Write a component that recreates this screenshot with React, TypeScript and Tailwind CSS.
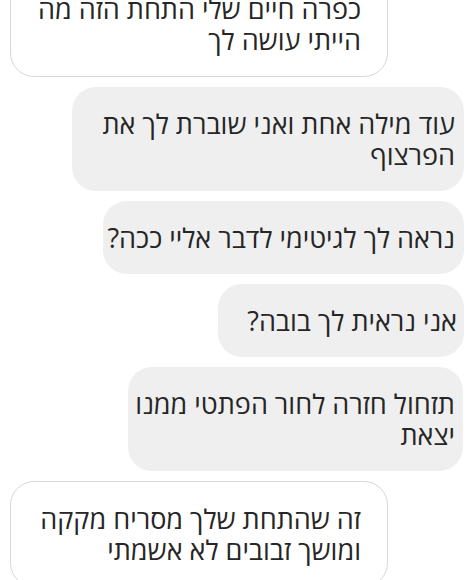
import React from "react";

const font = { fontFamily: '"Open Sans", "DejaVu Sans", "Liberation Sans", sans-serif' };

export default function App() {
  return (
    <div className="h-[580px] w-full overflow-hidden bg-white" style={font}>
      <div className="mt-[-29px] flex flex-col gap-[10px] text-[27px] leading-[31px] text-[#262626]">
        <div dir="rtl" className="ml-[10px] w-[378px] self-start rounded-[24px] border border-[#d8d8d8] bg-white py-[21px] pr-[26px] text-right">
          <div className="whitespace-nowrap">כפרה חיים שלי התחת הזה מה</div>
          <div className="whitespace-nowrap">הייתי עושה לך</div>
        </div>
        <div dir="rtl" className="mr-[3px] w-[392px] self-end rounded-[24px] bg-[#efefef] py-[21px] pr-[9px] text-right">
          <div className="whitespace-nowrap">עוד מילה אחת ואני שוברת לך את</div>
          <div className="whitespace-nowrap">הפרצוף</div>
        </div>
        <div dir="rtl" className="mr-[3px] w-[361px] self-end rounded-[24px] bg-[#efefef] py-[21px] pr-[9px] text-right">
          <div className="whitespace-nowrap">נראה לך לגיטימי לדבר אליי ככה?</div>
        </div>
        <div dir="rtl" className="mr-[3px] w-[246px] self-end rounded-[24px] bg-[#efefef] py-[21px] pr-[7px] text-right">
          <div className="whitespace-nowrap">אני נראית לך בובה?</div>
        </div>
        <div dir="rtl" className="mr-[4px] w-[335px] self-end rounded-[24px] bg-[#efefef] py-[21px] pr-[8px] text-right">
          <div className="whitespace-nowrap">תזחול חזרה לחור הפתטי ממנו</div>
          <div className="whitespace-nowrap">יצאת</div>
        </div>
        <div dir="rtl" className="ml-[10px] w-[378px] self-start rounded-[24px] border border-[#d8d8d8] bg-white py-[21px] pr-[26px] text-right">
          <div className="whitespace-nowrap">זה שהתחת שלך מסריח מקקה</div>
          <div className="whitespace-nowrap">ומושך זבובים לא אשמתי</div>
        </div>
      </div>
    </div>
  );
}
